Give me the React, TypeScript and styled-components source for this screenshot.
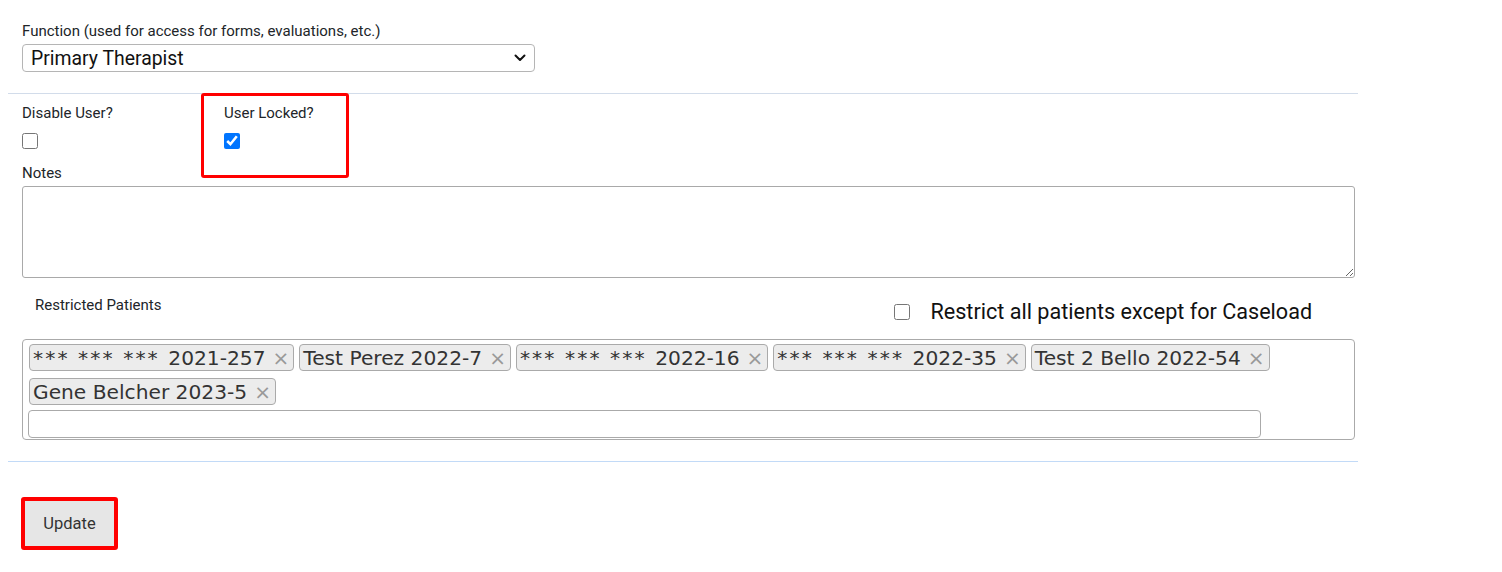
import React from "react";
import styled, { createGlobalStyle } from "styled-components";

const GlobalStyle = createGlobalStyle`
	body {
		margin: 0;
		background: #fff;
		font-family: Roboto, "Liberation Sans", sans-serif;
		color: #212529;
	}
`;

const Page = styled.main`
	width: 1350px;
	padding: 21px 0 0 8px;
`;

const Section = styled.section`
	padding: 0 3px 0 14px;
`;

const Label = styled.div<{ $size?: number; $indent?: number }>`
	font-size: ${({ $size }) => $size ?? 15}px;
	line-height: 20px;
	padding-left: ${({ $indent }) => $indent ?? 0}px;
	color: #212529;
`;

const SelectBox = styled.div`
	margin-top: 3px;
	width: 513px;
	height: 28px;
	box-sizing: border-box;
	border: 1px solid #b5b5b5;
	border-radius: 4px;
	display: flex;
	align-items: center;
	justify-content: space-between;
	padding: 0 8px 0 8px;
	font-size: 19.4px;
	color: #111;
`;

const Divider = styled.hr<{ $color: string; $top: number }>`
	margin: ${({ $top }) => $top}px 0 0;
	border: 0;
	border-top: 1px solid ${({ $color }) => $color};
	height: 0;
`;

const FlagRow = styled.div`
	display: flex;
	padding: 9px 3px 0 14px;
`;

const FlagCol = styled.div<{ $width?: number }>`
	position: relative;
	width: ${({ $width }) => ($width ? `${$width}px` : "auto")};
	display: flex;
	flex-direction: column;
	align-items: flex-start;
	gap: 10px;
`;

const Highlight = styled.div`
	position: absolute;
	left: -23px;
	top: -10px;
	width: 148px;
	height: 85px;
	box-sizing: border-box;
	border: 3px solid #ff0000;
	border-radius: 3px;
	pointer-events: none;
`;

const Check = styled.input`
	width: 16px;
	height: 16px;
	margin: 0;
	accent-color: #0075ff;
`;

const NotesLabel = styled(Label)`
	margin-top: 14px;
`;

const Notes = styled.textarea`
	display: block;
	margin-top: 3px;
	width: 1333px;
	height: 92px;
	box-sizing: border-box;
	border: 1px solid #a9a9a9;
	border-radius: 3px;
	resize: vertical;
	font-family: inherit;
`;

const RestrictRow = styled.div`
	margin-top: 17px;
	height: 44px;
	display: flex;
	align-items: flex-start;
`;

const RestrictAll = styled.label`
	margin-left: 733px;
	margin-top: 5px;
	display: flex;
	align-items: center;
	gap: 20px;
	font-size: 21.6px;
	line-height: 24px;
	color: #111;
`;

const TagBox = styled.div`
	width: 1333px;
	box-sizing: border-box;
	border: 1px solid #aaa;
	border-radius: 4px;
	padding: 4px 5px 1px;
`;

const TagList = styled.div`
	display: flex;
	flex-wrap: wrap;
	gap: 7px 5px;
	padding-left: 1px;
`;

const Tag = styled.span`
	height: 27px;
	box-sizing: border-box;
	display: inline-flex;
	align-items: center;
	gap: 7px;
	padding: 0 4px 0 3px;
	background: #ececec;
	border: 1px solid #aaa;
	border-radius: 4px;
	font-family: "DejaVu Sans", Verdana, sans-serif;
	font-size: 20.2px;
	color: #333;
	white-space: nowrap;
`;

const Mask = styled.span`
	letter-spacing: 2.1px;
`;

const Remove = styled.span`
	color: #999;
	font-size: 20px;
	line-height: 1;
`;

const Search = styled.input`
	display: block;
	margin-top: 5px;
	width: 1233px;
	height: 28px;
	box-sizing: border-box;
	border: 1px solid #aaa;
	border-radius: 4px;
`;

const ButtonWrap = styled.div`
	padding: 35px 0 22px 13px;
`;

const UpdateButton = styled.button`
	width: 97px;
	height: 53px;
	box-sizing: border-box;
	border: 4px solid #ff0000;
	border-radius: 3px;
	background: #e6e6e6;
	font-family: Roboto, "Liberation Sans", sans-serif;
	font-size: 16.5px;
	color: #333;
	cursor: pointer;
`;

const patients = [
	{ name: "", masked: true, id: "2021-257" },
	{ name: "Test Perez", masked: false, id: "2022-7" },
	{ name: "", masked: true, id: "2022-16" },
	{ name: "", masked: true, id: "2022-35" },
	{ name: "Test 2 Bello", masked: false, id: "2022-54" },
	{ name: "Gene Belcher", masked: false, id: "2023-5" },
];

const Chevron = () => (
	<svg width="12" height="8" viewBox="0 0 12 8" fill="none">
		<path d="M1.5 1.5 6 6l4.5-4.5" stroke="#111" strokeWidth="2" strokeLinecap="round" strokeLinejoin="round" />
	</svg>
);

const App: React.FC = () => (
	<>
		<GlobalStyle />
		<Page>
			<Section>
				<Label>Function (used for access for forms, evaluations, etc.)</Label>
				<SelectBox>
					<span>Primary Therapist</span>
					<Chevron />
				</SelectBox>
			</Section>
			<Divider $color="#d2dcea" $top={21} />
			<FlagRow>
				<FlagCol $width={202}>
					<Label>Disable User?</Label>
					<Check type="checkbox" readOnly />
				</FlagCol>
				<FlagCol>
					<Highlight />
					<Label>User Locked?</Label>
					<Check type="checkbox" defaultChecked />
				</FlagCol>
			</FlagRow>
			<Section>
				<NotesLabel>Notes</NotesLabel>
				<Notes />
				<RestrictRow>
					<Label $indent={13}>Restricted Patients</Label>
					<RestrictAll>
						<Check type="checkbox" readOnly />
						Restrict all patients except for Caseload
					</RestrictAll>
				</RestrictRow>
				<TagBox>
					<TagList>
						{patients.map((p) => (
							<Tag key={p.id}>
								<span>
									{p.masked ? <Mask>*** *** *** </Mask> : `${p.name} `}
									{p.id}
								</span>
								<Remove>×</Remove>
							</Tag>
						))}
					</TagList>
					<Search />
				</TagBox>
			</Section>
			<Divider $color="#c2daf7" $top={21} />
			<ButtonWrap>
				<UpdateButton>Update</UpdateButton>
			</ButtonWrap>
		</Page>
	</>
);

export default App;
